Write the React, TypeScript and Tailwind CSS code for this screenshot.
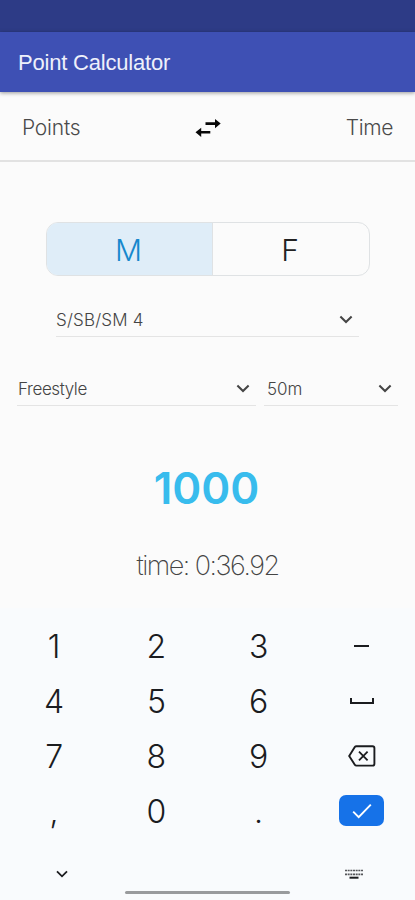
import { useState } from 'react'
import clsx from 'clsx'

function Chevron({ className }: { className?: string }) {
  return (
    <svg viewBox="0 0 12 8" fill="none" stroke="currentColor" className={clsx('shrink-0', className)}>
      <path d="M1 1.3 6 6.3 11 1.3" strokeWidth="1.8" />
    </svg>
  )
}

function SwapIcon() {
  return (
    <svg viewBox="0 0 26 18" className="w-[26px] h-[18px]" fill="#080808">
      <path d="M10.5 3.3h9.5V0L25.700 4.600 20 9.200V5.900h-9.500z" />
      <path d="M15.300 12h-9.100V8.700L0.500 13.300l5.700 4.600v-3.300h9.100z" />
    </svg>
  )
}

function SpaceIcon() {
  return (
    <svg viewBox="0 0 26 8" className="w-[26px] h-2" fill="none" stroke="#1b1c1f" strokeWidth="2">
      <path d="M2 1v5h22V1" />
    </svg>
  )
}

function BackspaceIcon() {
  return (
    <svg viewBox="0 0 28 22" className="w-7 h-[22px]" fill="none" stroke="#1b1c1f">
      <path d="M8.4 1.2h16.1a1.9 1.9 0 0 1 1.9 1.9v15.6a1.9 1.9 0 0 1-1.9 1.9H8.4a2 2 0 0 1-1.6-.9L1.200 11l5.600-8.900a2 2 0 0 1 1.600-.9z" strokeWidth="1.9" />
      <path d="m11 6.600 8.600 8.800M19.600 6.600 11 15.400" strokeWidth="1.8" />
    </svg>
  )
}

function CheckIcon() {
  return (
    <svg viewBox="0 0 20 16" className="w-5 h-4" fill="none" stroke="#fff" strokeWidth="1.9">
      <path d="m1.200 8.600 5.500 5.500L18.800 1.700" />
    </svg>
  )
}

function KeyboardIcon() {
  return (
    <svg viewBox="0 0 18 10" className="w-[18px] h-2.5" fill="none">
      <path d="M0 1.500h18M0 5.300h18" stroke="#55565a" strokeWidth="1.7" strokeDasharray="2 0.67" />
      <path d="M4.500 8.700h9" stroke="#1b1c1f" strokeWidth="2" />
    </svg>
  )
}

function Select({ label, className }: { label: string; className?: string }) {
  return (
    <button className={clsx('flex items-center justify-between h-[35px] border-b border-[#e4e4e4] text-[#444]', className)}>
      <span className="pt-[3px]">{label}</span>
      <Chevron className="w-3.5 h-[9px] text-[#454545]" />
    </button>
  )
}

const digits = [
  ['1', '2', '3'],
  ['4', '5', '6'],
  ['7', '8', '9'],
  [',', '0', '.'],
]

const actions = [
  <span className="w-[15px] h-0.5 bg-[#1b1c1f]" />,
  <SpaceIcon />,
  <BackspaceIcon />,
  <span className="flex items-center justify-center w-[45px] h-[31px] rounded-[7px] bg-[#1672e8]">
    <CheckIcon />
  </span>,
]

export default function App() {
  const [gender, setGender] = useState('M')

  return (
    <div className="flex flex-col w-[415px] h-[900px] overflow-hidden bg-[#fbfbfb] font-['Inter','Liberation_Sans',sans-serif] font-light">
      {/* Status bar */}
      <div className="h-8 shrink-0 bg-[#2d3b86]" />

      {/* App bar */}
      <header className="relative flex items-center h-[60px] shrink-0 px-[18px] bg-[#3e50b4] shadow-[0_1px_4px_rgba(0,0,0,0.4)]">
        <h1 className="text-[22px] font-normal tracking-[-0.2px] text-[#eef0fb] font-['Liberation_Sans',sans-serif]">Point Calculator</h1>
      </header>

      {/* Conversion direction */}
      <div className="grid grid-cols-3 items-center h-[70px] shrink-0 pt-[3px] px-[22px] border-b-2 border-[#e2e2e2] text-[21px] text-[#4a4a4a]">
        <span className="tracking-[-0.2px]">Points</span>
        <span className="justify-self-center pl-0.5">
          <SwapIcon />
        </span>
        <span className="justify-self-end tracking-[-0.4px]">Time</span>
      </div>

      <main className="flex flex-col h-[446px] shrink-0 pt-[60px]">
        {/* Gender toggle */}
        <div className="flex w-[324px] h-[54px] ml-[46px] overflow-hidden rounded-xl border border-[#dfe2e4]">
          {['M', 'F'].map((g) => (
            <button
              key={g}
              onClick={() => setGender(g)}
              className={clsx(
                'pt-0.5 text-[30px] leading-none',
                g === 'M' ? 'w-[165px] pr-0.5' : 'flex-1 pr-0.5 border-l border-[#dfe2e4]',
                gender === g ? 'bg-[#dfedf8] text-[#1688cd]' : 'text-[#222]'
              )}
            >
              {g}
            </button>
          ))}
        </div>

        {/* Event selects */}
        <Select label="S/SB/SM 4" className="mt-[26px] ml-14 w-[303px] pr-1.5 text-[17px] tracking-[0.2px]" />
        <div className="flex gap-2 mt-[34px] px-[17px] text-[17px]">
          <Select label="Freestyle" className="w-[239px] pl-px pr-1.5 tracking-[-0.4px]" />
          <Select label="50m" className="w-[134px] pl-[3px] pr-1.5" />
        </div>

        {/* Result */}
        <p className="mt-[60px] pr-0.5 text-center text-[44px] leading-[44px] font-semibold text-[#38bced]">1000</p>
        <p className="mt-[39px] text-center text-[27px] leading-[34px] tracking-[-1.5px] font-extralight text-[#444]">time: 0:36.92</p>
      </main>

      {/* Numeric keyboard */}
      <div className="flex flex-col flex-1 pt-2.5 bg-[#f9fbfd] text-[#1b1c1f]">
        {digits.map((row, i) => (
          <div key={i} className="grid grid-cols-4 items-center h-[55px] pl-1 pr-0.5 text-[32px] leading-none">
            {row.map((d) => (
              <button key={d} className="h-full pt-0.5 pr-0.5">{d}</button>
            ))}
            <button className="flex items-center justify-center h-full">{actions[i]}</button>
          </div>
        ))}
        <div className="flex items-center justify-between h-[72px] pl-14 pr-[52px]">
          <Chevron className="w-3 h-2" />
          <span className="w-[165px] h-[3px] mt-9 ml-[1px] rounded-full bg-[#999b9d]" />
          <KeyboardIcon />
        </div>
      </div>
    </div>
  )
}
